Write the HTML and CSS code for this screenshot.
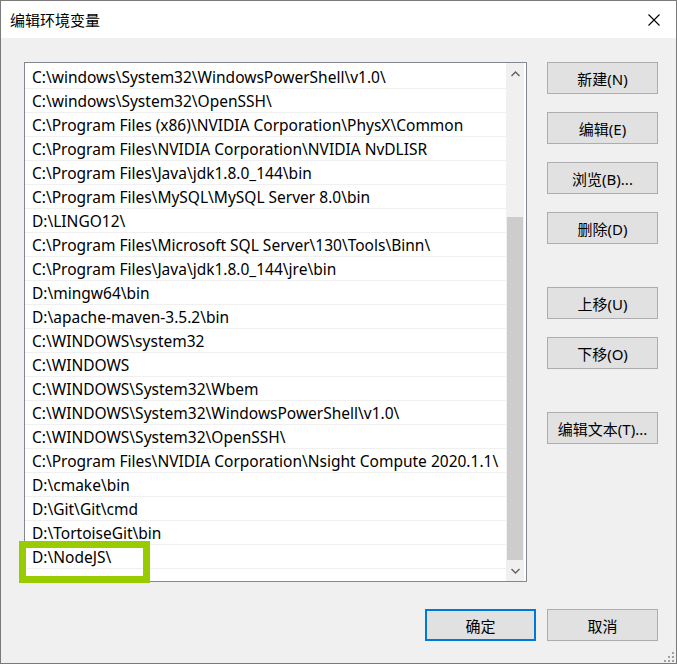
FILE: index.html
```html
<!DOCTYPE html>
<html lang="zh-CN">
<head>
  <meta charset="UTF-8" />
  <meta name="viewport" content="width=device-width, initial-scale=1.0"/>
  <title>编辑环境变量</title>
  <link rel="stylesheet" href="styles.css">
</head>
<body>
  <div class="window">
    <div class="titlebar">
      <span class="title">编辑环境变量</span>
      <svg class="close" width="12" height="12" viewBox="0 0 12 12">
        <path d="M0.5 0.5 L11.5 11.5 M11.5 0.5 L0.5 11.5" stroke="#000" stroke-width="1.1" fill="none"/>
      </svg>
    </div>

    <div class="content">
      <div class="main">
        <div class="listbox">
          <div class="rows">
            <div class="item">C:\windows\System32\WindowsPowerShell\v1.0\</div>
            <div class="item">C:\windows\System32\OpenSSH\</div>
            <div class="item">C:\Program Files (x86)\NVIDIA Corporation\PhysX\Common</div>
            <div class="item">C:\Program Files\NVIDIA Corporation\NVIDIA NvDLISR</div>
            <div class="item">C:\Program Files\Java\jdk1.8.0_144\bin</div>
            <div class="item">C:\Program Files\MySQL\MySQL Server 8.0\bin</div>
            <div class="item">D:\LINGO12\</div>
            <div class="item">C:\Program Files\Microsoft SQL Server\130\Tools\Binn\</div>
            <div class="item">C:\Program Files\Java\jdk1.8.0_144\jre\bin</div>
            <div class="item">D:\mingw64\bin</div>
            <div class="item">D:\apache-maven-3.5.2\bin</div>
            <div class="item">C:\WINDOWS\system32</div>
            <div class="item">C:\WINDOWS</div>
            <div class="item">C:\WINDOWS\System32\Wbem</div>
            <div class="item">C:\WINDOWS\System32\WindowsPowerShell\v1.0\</div>
            <div class="item">C:\WINDOWS\System32\OpenSSH\</div>
            <div class="item">C:\Program Files\NVIDIA Corporation\Nsight Compute 2020.1.1\</div>
            <div class="item">D:\cmake\bin</div>
            <div class="item">D:\Git\Git\cmd</div>
            <div class="item">D:\TortoiseGit\bin</div>
            <div class="item">D:\NodeJS\</div>
            <div class="item"></div>
          </div>
          <div class="scrollbar">
            <div class="arrow">
              <svg width="9" height="6" viewBox="0 0 9 6"><path d="M0.5 5 L4.5 1 L8.5 5" stroke="#606060" stroke-width="1.4" fill="none"/></svg>
            </div>
            <div class="track">
              <div class="thumb"></div>
            </div>
            <div class="arrow">
              <svg width="9" height="6" viewBox="0 0 9 6"><path d="M0.5 1 L4.5 5 L8.5 1" stroke="#606060" stroke-width="1.4" fill="none"/></svg>
            </div>
          </div>
          <div class="highlight"></div>
        </div>

        <div class="side">
          <div class="group">
            <button class="btn">新建(N)</button>
            <button class="btn">编辑(E)</button>
            <button class="btn">浏览(B)...</button>
            <button class="btn">删除(D)</button>
          </div>
          <div class="group move">
            <button class="btn">上移(U)</button>
            <button class="btn">下移(O)</button>
          </div>
          <div class="group text">
            <button class="btn">编辑文本(T)...</button>
          </div>
        </div>
      </div>

      <div class="footer">
        <button class="btn default">确定</button>
        <button class="btn">取消</button>
      </div>
    </div>

    <div class="grip">
      <svg width="10" height="10" viewBox="0 0 10 10" fill="#a0a0a0">
        <rect x="8" y="0" width="2" height="2"/>
        <rect x="4" y="4" width="2" height="2"/><rect x="8" y="4" width="2" height="2"/>
        <rect x="0" y="8" width="2" height="2"/><rect x="4" y="8" width="2" height="2"/><rect x="8" y="8" width="2" height="2"/>
      </svg>
    </div>
  </div>
</body>
</html>
```

FILE: styles.css
```css
* {
  box-sizing: border-box;
}

body {
  margin: 0;
  font-family: "Noto Sans", "Noto Sans CJK SC", sans-serif;
  background-color: #ffffff;
}

.window {
  position: relative;
  width: 677px;
  height: 664px;
  border: 1px solid #7a7a7a;
  background-color: #f0f0f0;
  display: flex;
  flex-direction: column;
}

.titlebar {
  height: 37px;
  background-color: #ffffff;
  display: flex;
  align-items: center;
  justify-content: space-between;
  padding: 0 16px 0 9px;
}

.title {
  font-family: "Noto Sans CJK SC", sans-serif;
  font-size: 15px;
  color: #000;
}

.content {
  flex: 1;
  padding: 24px 18px 0 23px;
  display: flex;
  flex-direction: column;
}

.main {
  display: flex;
  gap: 20px;
}

.listbox {
  position: relative;
  width: 503px;
  height: 520px;
  border: 1px solid #828790;
  background-color: #ffffff;
  display: flex;
}

.rows {
  flex: 1;
  padding-top: 2px;
  overflow: hidden;
}

.item {
  height: 24px;
  border-bottom: 1px solid #f0f0f0;
  padding-left: 7px;
  font-size: 15.5px;
  line-height: 24px;
  color: #000;
  white-space: nowrap;
}

.scrollbar {
  width: 18px;
  margin-right: 2px;
  background-color: #f0f0f0;
  display: flex;
  flex-direction: column;
}

.arrow {
  height: 21px;
  display: flex;
  align-items: center;
  justify-content: center;
}

.track {
  flex: 1;
  padding-top: 133px;
}

.thumb {
  height: 100%;
  margin: 0 1px;
  background-color: #cdcdcd;
}

.highlight {
  position: absolute;
  left: -6px;
  top: 478px;
  width: 131px;
  height: 42px;
  border: 7px solid #99cc00;
}

.side {
  display: flex;
  flex-direction: column;
}

.group {
  display: flex;
  flex-direction: column;
  gap: 18px;
}

.group.move {
  margin-top: 43px;
}

.group.text {
  margin-top: 43px;
}

.btn {
  width: 111px;
  height: 32px;
  border: 1px solid #adadad;
  background-color: #e1e1e1;
  font-family: "Noto Sans", "Noto Sans CJK SC", sans-serif;
  font-size: 15px;
  color: #000;
  padding: 0;
}

.footer {
  margin-top: 27px;
  display: flex;
  justify-content: flex-end;
  gap: 11px;
}

.btn.default {
  border: 2px solid #0078d7;
}

.grip {
  position: absolute;
  right: 2px;
  bottom: 1px;
  line-height: 0;
}
```
